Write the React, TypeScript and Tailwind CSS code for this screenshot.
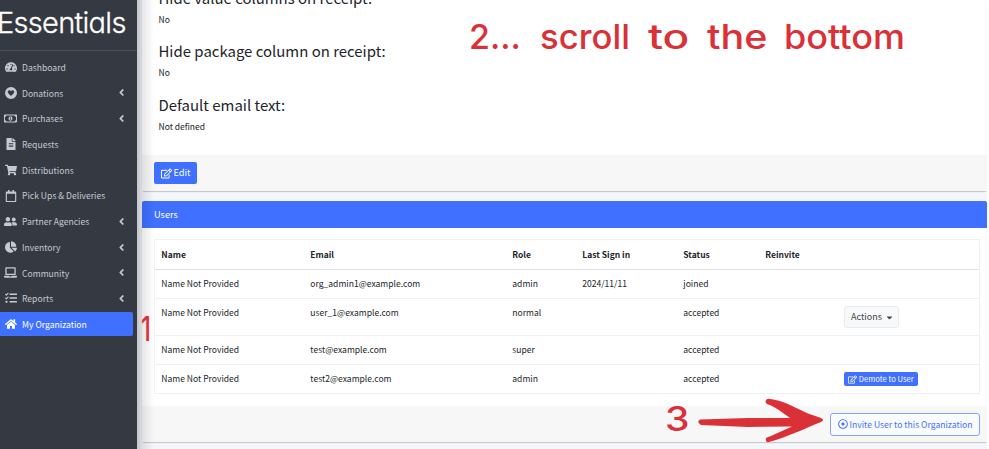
import type { ReactNode } from "react";
import type { IconType } from "react-icons";
import {
  FaAngleLeft,
  FaCaretDown,
  FaChartPie,
  FaFileAlt,
  FaHome,
  FaLaptop,
  FaRegCalendar,
  FaRegDotCircle,
  FaRegEdit,
  FaRegMoneyBillAlt,
  FaShoppingCart,
  FaTachometerAlt,
  FaTasks,
  FaUserFriends,
} from "react-icons/fa";

function HeartCircle() {
  return (
    <svg viewBox="0 0 20 20" width="1em" height="1em" fill="currentColor">
      <path
        fillRule="evenodd"
        d="M10 0a10 10 0 1 0 0 20a10 10 0 0 0 0-20ZM10 15.2L5.4 10.4C3.6 8.3 5 5.4 7.300 5.400C8.600 5.400 9.500 6.100 10 7C10.500 6.100 11.400 5.400 12.700 5.400C15 5.400 16.400 8.300 14.600 10.400Z"
      />
    </svg>
  );
}

type NavItem = { label: string; icon: IconType | typeof HeartCircle; menu?: boolean; active?: boolean; wide?: boolean };

const nav: NavItem[] = [
  { label: "Dashboard", icon: FaTachometerAlt },
  { label: "Donations", icon: HeartCircle, menu: true },
  { label: "Purchases", icon: FaRegMoneyBillAlt, menu: true, wide: true },
  { label: "Requests", icon: FaFileAlt },
  { label: "Distributions", icon: FaShoppingCart },
  { label: "Pick Ups & Deliveries", icon: FaRegCalendar },
  { label: "Partner Agencies", icon: FaUserFriends, menu: true, wide: true },
  { label: "Inventory", icon: FaChartPie, menu: true },
  { label: "Community", icon: FaLaptop, menu: true, wide: true },
  { label: "Reports", icon: FaTasks, menu: true },
  { label: "My Organization", icon: FaHome, active: true },
];

function Sidebar() {
  return (
    <aside className="flex h-full w-[137px] shrink-0 flex-col bg-[#353a42] text-[#c5c9d1]">
      <div className="h-[51px] shrink-0 border-b border-[#455058] pt-[4px]">
        <span className="-ml-[3px] block whitespace-nowrap font-['Inter'] text-[29px] leading-[37px] font-light tracking-[-0.700px] text-white [-webkit-text-stroke:0.300px_white] [font-feature-settings:'cv11']">
          Essentials
        </span>
      </div>
      <nav className="mt-[4px] flex flex-col gap-[1.720px]">
        {nav.map(({ label, icon: Icon, menu, active, wide }) => (
          <a
            key={label}
            className={`flex h-6 w-[133px] items-center rounded-r-[2px] ${active ? "bg-[#3f70ff] text-white" : ""}`}
          >
            <span className={`mr-[1px] flex w-[21px] justify-center ${wide ? "text-[13px]" : "text-[12px]"}`}>
              <Icon />
            </span>
            <span className="flex-1 pt-[0.500px] text-[8.600px] whitespace-nowrap">{label}</span>
            {menu && <FaAngleLeft className="mr-[6.500px] text-[11px]" />}
          </a>
        ))}
      </nav>
    </aside>
  );
}

function Setting({ title, children }: { title: string; children: ReactNode }) {
  return (
    <div className="h-[53.400px] pl-[16.500px]">
      <h3 className="text-[14.950px] leading-[21px] whitespace-nowrap">{title}</h3>
      <p className="mt-[4px] leading-[14px]">{children}</p>
    </div>
  );
}

const cols = ["Name", "Email", "Role", "Last Sign in", "Status", "Reinvite", ""];

const users = [
  ["Name Not Provided", "org_admin1@example.com", "admin", "2024/11/11", "joined"],
  ["Name Not Provided", "user_1@example.com", "normal", "", "accepted"],
  ["Name Not Provided", "test@example.com", "super", "", "accepted"],
  ["Name Not Provided", "test2@example.com", "admin", "", "accepted"],
];

const grid = "grid grid-cols-[149px_202px_70px_101px_82px_79px_1fr] border-b";

function ActionCell({ row }: { row: number }) {
  if (row === 1)
    return (
      <button className="flex h-[22px] w-[55px] items-center justify-center gap-[3px] rounded-[3px] border border-[#e9ebed] bg-[#f8f9fa] pl-[2px] text-[9px] text-[#444]">
        Actions <FaCaretDown className="text-[9px]" />
      </button>
    );
  if (row === 3)
    return (
      <button className="flex h-[14px] w-[74px] items-center justify-center gap-[1.500px] rounded-[2px] bg-[#3f70ff] text-[7.600px] whitespace-nowrap text-white">
        <FaRegEdit className="text-[9px]" /> Demote to User
      </button>
    );
  return null;
}

function UsersTable() {
  return (
    <div className="border border-b-0 border-[#f0f1f3]">
      <div className={`${grid} h-[30px] border-[#dee2e6] font-bold`}>
        {cols.map((c, i) => (
          <div key={i} className="pt-[7px] pl-[6.300px] leading-[15px]">
            {c}
          </div>
        ))}
      </div>
      {users.map((u, r) => (
        <div key={r} className={`${grid} border-[#f0f1f3] ${r === 1 ? "h-[37px]" : "h-[29px]"}`}>
          {u.map((v, i) => (
            <div key={i} className="pt-[6px] pl-[6.300px] text-[8.550px] leading-[15px]">
              {v}
            </div>
          ))}
          <div />
          <div className="pt-[7px] pl-[6px]">
            <ActionCell row={r} />
          </div>
        </div>
      ))}
    </div>
  );
}

const pen =
  "absolute origin-left whitespace-nowrap font-['Inter'] font-medium text-[#da3038] [font-feature-settings:'cv11'] text-[34px] leading-[40px]";

function Annotations() {
  return (
    <div className="pointer-events-none">
      <span className={`${pen} top-[17px] left-[469px]`}>2...</span>
      <span className={`${pen} top-[17px] left-[540px] scale-x-102`}>scroll</span>
      <span className={`${pen} top-[17px] left-[648px] scale-x-130`}>to</span>
      <span className={`${pen} top-[17px] left-[707px] scale-x-116`}>the</span>
      <span className={`${pen} top-[17px] left-[784px] scale-x-106`}>bottom</span>
      <span className={`${pen} top-[309px] left-[141px] scale-x-70`}>1</span>
      <span className={`${pen} top-[399px] left-[665px] scale-x-115`}>3</span>
      <svg className="absolute top-[395px] left-[695px]" width="132" height="50" viewBox="695 395 132 50" fill="#da3038">
        <path d="M700 419.500L748 418L790 418C783 413 776 407 767 404C764 402 766 398 770 399C783 400 795 408 808 413.500L821 418Q825 420 821 422C806 428 790 436 769 442Q765 443 766 438C776 434 784 430 792 426.500L748 427L701 425Q696 422 700 419.500Z" />
      </svg>
    </div>
  );
}

export default function App() {
  return (
    <div className="relative flex h-[449px] w-[989px] overflow-hidden bg-white font-['Noto_Sans_CJK_SC',sans-serif] text-[8.500px] text-[#212529]">
      <Sidebar />
      <div className="w-[5px] shrink-0 bg-linear-to-r from-[#c4c5cb] to-[#dcdde3]" />
      <main className="relative flex w-[845px] shrink-0 flex-col bg-[#f4f6f9]">
        <section className="flex h-[191px] shrink-0 flex-col rounded-b-[2px] bg-white shadow-[0_1px_1px_#00000033]">
          <div className="-mt-[13px] h-[168px] shrink-0">
            <Setting title="Hide value columns on receipt:">No</Setting>
            <Setting title="Hide package column on receipt:">No</Setting>
            <Setting title="Default email text:">Not defined</Setting>
          </div>
          <div className="flex flex-1 items-center bg-[#f7f7f7] pl-3">
            <button className="flex h-[22px] w-[43px] items-center justify-center gap-[2px] rounded-[2px] bg-[#3f70ff] text-[9.200px] text-white">
              <FaRegEdit className="text-[11px]" /> Edit
            </button>
          </div>
        </section>
        <section className="mt-[10px] flex h-[241px] shrink-0 flex-col rounded-[2px] bg-white shadow-[0_1px_1px_#00000033]">
          <header className="flex h-[27px] shrink-0 items-center rounded-t-[2px] bg-[#3f70ff] pl-3 text-[9.200px] text-white">
            Users
          </header>
          <div className="h-[178px] shrink-0 pt-[11px] pr-[7px] pl-3">
            <UsersTable />
          </div>
          <footer className="flex flex-1 items-center justify-end bg-[#f7f7f7] pr-[7px]">
            <button className="flex h-[23px] w-[150px] items-center justify-center gap-[2px] rounded-[3px] border border-[#84a5ff] bg-[#fafbff] text-[8.600px] whitespace-nowrap text-[#3f70ff]">
              <FaRegDotCircle className="text-[10px]" /> Invite User to this Organization
            </button>
          </footer>
        </section>
        <div className="absolute inset-y-0 left-0 w-3 bg-linear-to-r from-black/10 to-transparent" />
      </main>
      <Annotations />
    </div>
  );
}
